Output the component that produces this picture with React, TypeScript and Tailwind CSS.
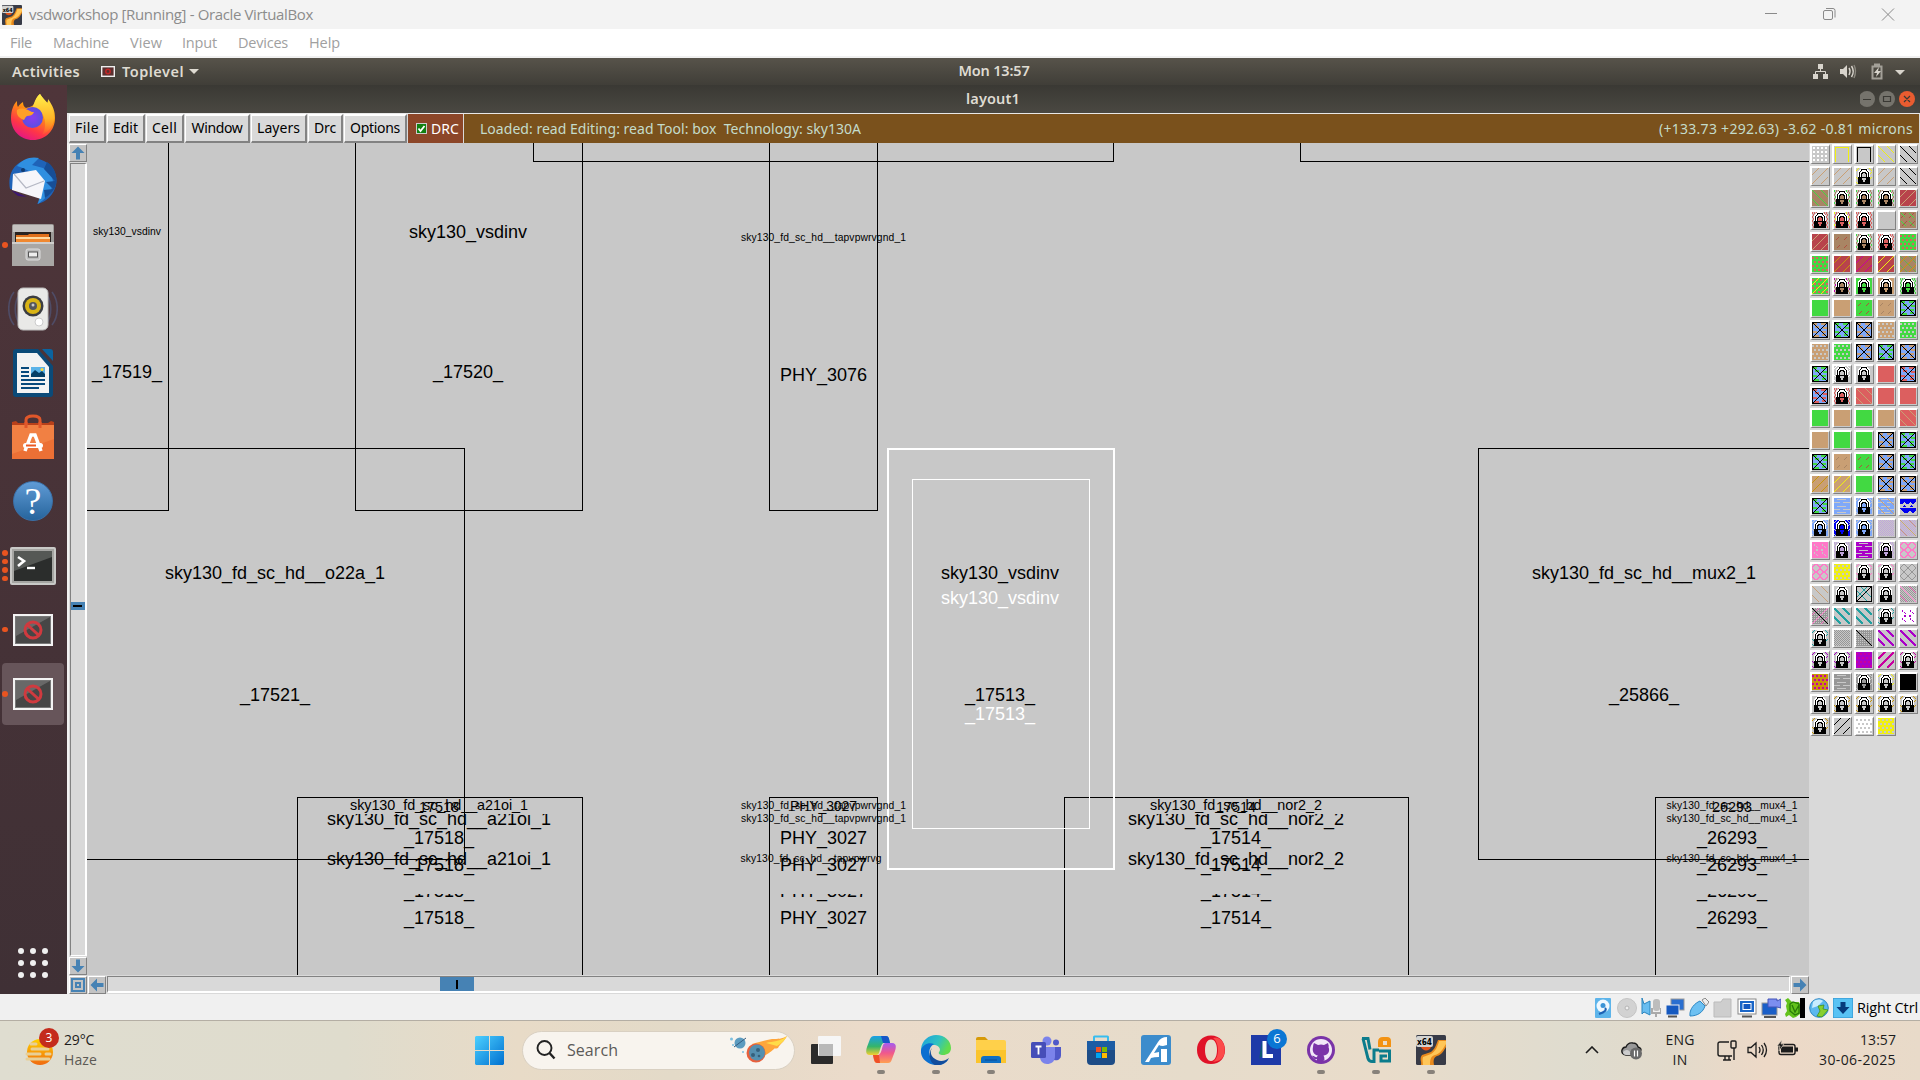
import React, { useLayoutEffect, useRef } from "react";

/* ---------- text that spreads its letters over a given width ---------- */
function Fit({ w, className = "", children }: { w: number; className?: string; children: string }) {
  const ref = useRef<HTMLSpanElement>(null);
  useLayoutEffect(() => {
    const el = ref.current;
    if (!el) return;
    el.style.letterSpacing = "0px";
    const natural = el.getBoundingClientRect().width;
    el.style.letterSpacing = `${(w - natural) / children.length}px`;
  }, [w, children]);
  return (
    <span ref={ref} className={"inline-block whitespace-pre " + className}>
      {children}
    </span>
  );
}

/* ---------- layer palette ---------- */
const C: Record<string, string> = {
  k: "#000000", w: "#ffffff", y: "#f0f010", t: "#c99f74", n: "#a98564", g: "#42d942", r: "#dc5f5f",
  R: "#b8434b", m: "#c800a0", o: "#c8960a", b: "#7fa8f8", B: "#0000f0", l: "#c0a4dc", p: "#ff78c8",
  P: "#aa00c8", T: "#20a0a0", a: "#969696", _: "#c8c8c8", D: "#b05040",
};

/* each tile: kind + fill + ink colours */
const PALETTE = [
  "G_w F_y F_k \\_y \\_k",
  "/_t /_t L_y /_t \\_k",
  "\\ng Cng Cng Cng /Rt",
  "Crr Cry Crr S_ %ng",
  "/Rt :nD Cng Crr Ogr",
  "Ogr /Ro /Rm /Ry Xno",
  "Ygy Cnm Lgg Ltt Cgg",
  "Sg St :gD :tn Kbg",
  "Kbt Kbg Kbt Ot_ Og_",
  "Ot_ Og_ Kbt Kbg Kbt",
  "Kbg L_w L__ Sr Kbr",
  "Kbr Crr \\rt Sr Sr",
  "Sg St Sg St \\rt",
  "St Sg Sg Kbt Kbg",
  "Kbg :tn :gD Kbt Kbg",
  "/to /ty Sg Kbt Kbt",
  "Kbg Wb_ Lb_ Wbt M_B",
  "Lb_ LB_ Lb_ Hl_ Hlt",
  "Np_ Cll WP_ Cll Q_p",
  "Q_p Yy_ L_p L_p Z_a",
  "\\_t L__ E_T L__ Hap",
  "Kap =_T =_T L_T NwP",
  "L_T Ha_ Ka_ =_P =_P",
  "L_P L_P OPm +_m L_m",
  "Oom Wa_ La_ L_y Sk",
  "L__ L_o L_o L_o L_o",
  "L_o /_k Ow_ Oy_",
].map((row) => row.split(" "));

const grid = (n: number, f: (x: number, y: number) => React.ReactNode) => {
  const out: React.ReactNode[] = [];
  for (let y = 0; y < n; y++) for (let x = 0; x < n; x++) out.push(f(x, y));
  return out;
};

const Lock = ({ hole }: { hole: string }) => (
  <>
    <path d="M2 9V4l3-4h6l3 4v5z" fill="#fff" />
    <path d="M3.500 9V4.500L6 1.500h4l2.500 3V9" fill="none" stroke="#000" />
    <path d="M5.500 9V6L7 4.500h2L10.500 6v3z" fill={hole} stroke="#000" />
    <rect x="2" y="9" width="12" height="7" fill="#000" />
    <path d="M6 10h4v2H9v2H7v-2H6z" fill={hole} />
  </>
);

function Tile({ code }: { code: string }) {
  const kind = code[0];
  const bg = C[code[1]] ?? C._;
  const ink = C[code[2]] ?? C._;
  let body: React.ReactNode = null;
  const fwd = <path d="M0 7L7 0M0 16L16 0M9 16L16 9" stroke={ink} strokeWidth="1" />;
  const back = <path d="M9 0L16 7M0 0L16 16M0 9L7 16" stroke={ink} strokeWidth="1" />;
  let fill = bg;
  switch (kind) {
    case "G":
      body = grid(4, (x, y) => <rect key={`${x}-${y}`} x={x * 4 + 1} y={y * 4 + 1} width="2" height="2" fill={ink} />);
      break;
    case "F":
      body = <path d="M1.500 16V1.500H14.500V16" fill="none" stroke={ink} strokeWidth="1.3" />;
      break;
    case "/": body = fwd; break;
    case "\\": body = back; break;
    case "+": body = <path d="M0 7L7 0M0 16L16 0M9 16L16 9" stroke={ink} strokeWidth="1.6" />; break;
    case "=": body = <path d="M9 0L16 7M0 0L16 16M0 9L7 16" stroke={ink} strokeWidth="1.6" />; break;
    case "X": body = <><path d="M9 0L16 7M0 0L16 16M0 9L7 16" stroke="#62b052" />{fwd}</>; break;
    case ":": body = <path d="M2 6L5 3M10 6L13 3M3 14L6 11M10 14L13 11" stroke={ink} />; break;
    case "%": body = <><path d="M1 6L6 1M9 6L14 1M2 14L7 9M10 14L15 9" stroke="#b05040" /><path d="M1 1l4 4M9 1l5 5M1 9l5 5M9 9l5 5" stroke={ink} /></>; break;
    case "O":
    case "Y":
      body = (
        <>
          {grid(4, (x, y) => (
            <rect key={`${x}-${y}`} x={x * 4 + (y % 2 ? 2 : 0)} y={y * 4 + 1} width="2" height="2" fill={kind === "Y" && bg === C.g ? C.r : ink} />
          ))}
          {kind === "Y" && bg === C.g && fwd}
        </>
      );
      break;
    case "W":
      body = (
        <>
          {[1, 4, 8, 11, 14].map((y, i) => (
            <path key={y} d={i % 2 ? `M0 ${y + 0.5}h6M9 ${y + 0.5}h7` : `M3 ${y + 0.5}h9`} stroke={C._} />
          ))}
          {ink !== C._ && back}
        </>
      );
      break;
    case "M": body = <path d="M0 1h16v2l-2 3h-2l-2-2-2 2H6L4 4 2 6H0zM2 9l2-2 2 2zM9 9l2-2 3 2zM0 10h16v2l-2 3h-2l-2-2-3 2H4l-2-2z" fill={ink} />; break;
    case "N": body = <path d="M2 2l4 4M10 2l4 4M2 10l4 4M10 10l4 4M4 8h2M9 8h3" stroke={ink} strokeWidth="1.4" strokeDasharray="2 1" />; break;
    case "Q":
      body = <g fill="none" stroke={ink} strokeWidth="1.500"><circle cx="4" cy="4" r="3.500" /><circle cx="12" cy="4" r="3.500" /><circle cx="4" cy="12" r="3.500" /><circle cx="12" cy="12" r="3.500" /></g>;
      break;
    case "Z":
      body = <path d="M0 4l4-4 12 12-4 4L0 4M0 12L12 0l4 4L4 16z" fill="none" stroke={ink} />;
      break;
    case "H":
      fill = C._;
      body = (
        <>
          {grid(8, (x, y) => <rect key={`${x}-${y}`} x={x * 2} y={y * 2} width="1" height="1" fill={bg} />)}
          {grid(8, (x, y) => <rect key={`b${x}-${y}`} x={x * 2 + 1} y={y * 2 + 1} width="1" height="1" fill={bg} />)}
          {code[2] !== "_" && back}
        </>
      );
      break;
    case "E": body = <><path d="M0 4L12 16M4 0L16 12M0 12L12 0" stroke={ink} strokeWidth="1.3" /><path d="M0 16L16 0M.5 .5h15v15H.5z" fill="none" stroke="#000" /></>; break;
    case "K":
      body =
        bg === C.a ? (
          <>
            {grid(8, (x, y) => <rect key={`${x}-${y}`} x={x * 2} y={y * 2} width="1" height="1" fill={C._} />)}
            {ink !== C._ && <path d="M0 7L7 0M0 16L16 0M9 16L16 9" stroke={ink} />}
            <path d="M0 0L16 16" stroke="#000" strokeWidth="1.200" />
          </>
        ) : (
          <>
            <path d="M1 2h4M9 2h5M3 5h4M11 6h4M1 10h4M10 10h4M2 14h5M10 13h4" stroke={ink} strokeWidth="2" />
            <path d="M.5 .5h15v15H.5zM0 0L16 16M0 16L16 0" fill="none" stroke="#000" />
          </>
        );
      break;
    case "C":
      fill = C._;
      body = (
        <>
          {grid(8, (x, y) => <rect key={`${x}-${y}`} x={x * 2 + (y % 2)} y={y * 2} width="1" height="2" fill={(x + y) % 3 ? bg : ink} />)}
          <Lock hole={bg} />
        </>
      );
      break;
    case "L":
      body = (
        <>
          {ink !== bg && <path d="M0 3l3-3M13 0l3 3M0 9l2 2M14 11l2-2M0 14l2 2M14 6l2-2" stroke={ink} />}
          <Lock hole={bg} />
        </>
      );
      break;
  }
  return (
    <div className="flex h-5 w-5 items-start justify-start border-t-2 border-l-2 border-r border-b border-t-white border-l-white border-r-[#828282] border-b-[#828282] bg-[#c8c8c8]">
      <svg width="16" height="16" viewBox="0 0 16 16" shapeRendering="crispEdges" className="block">
        <rect width="16" height="16" fill={fill} />
        {body}
      </svg>
    </div>
  );
}

/* ---------- layout canvas ---------- */
type Label = { t: string; x: number; y: number; w: number; s?: number; c?: string; clip?: number };
const big = "sky130_fd_sc_hd__a21oi_1";
const nor = "sky130_fd_sc_hd__nor2_2";
const tap = "sky130_fd_sc_hd__tapvpwrvgnd_1";
const mux = "sky130_fd_sc_hd__mux4_1";
const stack = (t: string, x: number, w: number): Label[] => [
  { t, x, y: 844, w },
  { t, x, y: 871, w },
  { t, x, y: 897, w, clip: 894 },
  { t, x, y: 924, w },
];
const LABELS: Label[] = [
  { t: "sky130_vsdinv", x: 127, y: 235, w: 68, s: 10.3 },
  { t: "sky130_vsdinv", x: 468, y: 238, w: 118 },
  { t: tap, x: 823.5, y: 241, w: 165, s: 10.3 },
  { t: "_17519_", x: 127, y: 378, w: 70 },
  { t: "_17520_", x: 468, y: 378, w: 70 },
  { t: "PHY_3076", x: 823.5, y: 381, w: 87 },
  { t: "sky130_fd_sc_hd__o22a_1", x: 275, y: 579, w: 220 },
  { t: "_17521_", x: 275, y: 701, w: 70 },
  { t: "sky130_vsdinv", x: 1000, y: 579, w: 118 },
  { t: "sky130_vsdinv", x: 1000, y: 604, w: 118, c: "#fff" },
  { t: "_17513_", x: 1000, y: 701, w: 70 },
  { t: "_17513_", x: 1000, y: 720, w: 70, c: "#fff" },
  { t: "sky130_fd_sc_hd__mux2_1", x: 1644, y: 579, w: 224 },
  { t: "_25866_", x: 1644, y: 701, w: 70 },
  { t: big, x: 439, y: 810, w: 178, s: 14.4 },
  { t: "17518", x: 439, y: 812, w: 40, s: 14.4 },
  { t: big, x: 439, y: 825, w: 224, clip: 814 },
  { t: big, x: 439, y: 865, w: 224 },
  ...stack("_17518_", 439, 70),
  { t: tap, x: 823.5, y: 809, w: 165, s: 10.3 },
  { t: "PHY_3027", x: 823.5, y: 811, w: 67, s: 14 },
  { t: tap, x: 823.5, y: 822, w: 165, s: 10.3 },
  { t: "sky130_fd_sc_hd__tapvpwrvg", x: 811, y: 862, w: 141, s: 10.3 },
  ...stack("PHY_3027", 823.5, 87),
  { t: nor, x: 1236, y: 810, w: 172, s: 14.4 },
  { t: "17514", x: 1236, y: 812, w: 40, s: 14.4 },
  { t: nor, x: 1236, y: 825, w: 216, clip: 814 },
  { t: nor, x: 1236, y: 865, w: 216 },
  ...stack("_17514_", 1236, 70),
  { t: mux, x: 1732, y: 809, w: 131, s: 10.3 },
  { t: "26293", x: 1732, y: 812, w: 40, s: 14.4 },
  { t: mux, x: 1732, y: 822, w: 131, s: 10.3 },
  { t: mux, x: 1732, y: 862, w: 131, s: 10.3 },
  ...stack("_26293_", 1732, 70),
];

const Canvas = () => (
  <svg width="1722" height="832" viewBox="87 143 1722 832" className="block bg-[#c8c8c8]">
    <defs>
      <clipPath id="c814"><rect x="87" y="814" width="1722" height="40" /></clipPath>
      <clipPath id="c894"><rect x="87" y="894" width="1722" height="20" /></clipPath>
    </defs>
    <g fill="none" stroke="#000" shapeRendering="crispEdges">
      <rect x="60.5" y="100.5" width="108" height="410" />
      <rect x="355.5" y="100.5" width="227" height="410" />
      <rect x="533.5" y="100.5" width="580" height="61" />
      <rect x="769.5" y="100.5" width="108" height="410" />
      <rect x="1300.5" y="100.5" width="580" height="61" />
      <rect x="60.5" y="448.5" width="404" height="411" />
      <rect x="1478.5" y="448.5" width="404" height="411" />
      <rect x="297.5" y="797.5" width="285" height="300" />
      <rect x="769.5" y="797.5" width="108" height="300" />
      <rect x="1064.5" y="797.5" width="344" height="300" />
      <rect x="1655.5" y="797.5" width="344" height="300" />
      <rect x="888" y="449" width="226" height="420" stroke="#fff" strokeWidth="2" />
      <rect x="912.5" y="479.5" width="177" height="349" stroke="#fff" />
    </g>
    <g fontFamily="'Liberation Sans', sans-serif" textAnchor="middle">
      {LABELS.map((l, i) => (
        <text
          key={i}
          x={l.x}
          y={l.y}
          fontSize={l.s ?? 18}
          fill={l.c ?? "#000"}
          textLength={l.w}
          clipPath={l.clip === 814 ? "url(#c814)" : l.clip === 894 ? "url(#c894)" : undefined}
        >
          {l.t}
        </text>
      ))}
    </g>
  </svg>
);

/* ---------- scroll bars ---------- */
const BTN = "flex h-[18px] w-[18px] shrink-0 items-center justify-center border border-t-white border-l-white border-r-[#828282] border-b-[#828282] bg-[#c3c3c3]";
const Arrow = ({ r }: { r: number }) => (
  <svg width="14" height="14" viewBox="0 0 14 14" style={{ transform: `rotate(${r}deg)` }}>
    <path d="M7 0.5L13.5 7H9v6.5H5V7H.5z" fill="#4682b4" />
  </svg>
);

/* ---------- dock icons ---------- */
const Firefox = () => (
  <svg width="48" height="48" viewBox="0 0 48 48">
    <defs>
      <linearGradient id="ff" x1=".8" y1="0" x2=".3" y2="1"><stop offset="0" stopColor="#fff44f" /><stop offset=".4" stopColor="#ff980e" /><stop offset=".75" stopColor="#ff3647" /><stop offset="1" stopColor="#e31587" /></linearGradient>
      <linearGradient id="fy" x1="0" y1="0" x2="0" y2="1"><stop offset="0" stopColor="#fff04a" /><stop offset=".6" stopColor="#ffb428" /><stop offset="1" stopColor="#ff7a28" stopOpacity=".2" /></linearGradient>
      <radialGradient id="fp"><stop offset="0" stopColor="#8a3df0" /><stop offset="1" stopColor="#5b4fe0" /></radialGradient>
    </defs>
    <path d="M31 1c2 3 4 6 7 9 1-1 1-3 1-4 5 7 7 12 7 19 0 12-9 22-22 22S2 37 2 25C2 18 4 12 8 8c0 3 0 4 1 6 1-2 3-4 5-5 0 3 1 5 3 6 4-1 8-2 9-6 1-3 2-6 5-8z" fill="url(#ff)" />
    <path d="M31 1c4 7 14 12 14 24 0 8-6 14-12 17 4-6 4-14 1-20-2-4-6-7-10-8 1-5 4-11 7-13z" fill="url(#fy)" />
    <circle cx="23.500" cy="24.500" r="10.500" fill="url(#fp)" />
    <path d="M8 17c5-3 9-1 13 1 1 1 3 1 4 1-1 3-4 4-7 4-2 1-2 3-3 4-5-2-8-5-7-10z" fill="#ffa028" />
  </svg>
);
const Thunderbird = () => (
  <svg width="50" height="50" viewBox="0 0 50 50">
    <path d="M3 17C8 4 25-1 36 5c9 4 14 14 12 24-2 9-9 17-19 19l4-7L2 33c-1-5-1-10 1-16z" fill="#1f63b8" />
    <path d="M9 10c5-7 14-10 22-8l-7 7 11 3c8 4 12 12 9 19-2 7-7 12-14 17l2-10C39 27 30 17 9 10z" fill="#2f8fe0" />
    <path d="M36 13l11 12-9 1 7 7-9 1 1 8c9-6 13-13 11-22-1-6-4-11-9-14z" fill="#174e96" />
    <path d="M5 18l23-4 9 11-4 18L4 34z" fill="#f6f6fa" />
    <path d="M6 18l12 14 18-7" fill="none" stroke="#b5b8c4" strokeWidth="1.2" />
    <path d="M3 34l16 7-9-1z" fill="#3c1673" />
    <circle cx="15" cy="14" r="2" fill="#103b70" />
  </svg>
);
const Files = () => (
  <svg width="44" height="46" viewBox="0 0 44 46">
    <rect x="1" y="2" width="42" height="42" rx="2" fill="#9c9a98" /><path d="M2 3h40v7H2z" fill="#c4c2c0" />
    <path d="M4 10h36v10H4z" fill="#2b2320" /><path d="M5 13h12l1-1h20v8H5z" fill="#e0701c" /><path d="M5 15h34v2H5z" fill="#ffd9a0" /><path d="M5 17h34v3H5z" fill="#f08830" />
    <path d="M1 20h42v24H1z" fill="#a9a7a5" /><path d="M1 20h42v2H1z" fill="#d0cecc" />
    <rect x="15" y="27" width="14" height="11" rx="2" fill="#bbb" stroke="#ddd" /><rect x="17.500" y="30" width="9" height="5" fill="#eee" stroke="#555" />
  </svg>
);
const Rhythm = () => (
  <svg width="50" height="46" viewBox="0 0 50 46">
    <path d="M6 6C-1 15-1 30 6 39M11 9c-5 8-5 20 0 28M44 6c7 9 7 24 0 33M39 9c5 8 5 20 0 28" fill="none" stroke="#4f4c66" strokeWidth="1.600" />
    <rect x="10" y="2" width="30" height="42" rx="5" fill="#e9e9e7" stroke="#bbb" />
    <circle cx="25" cy="20" r="10.500" fill="#3b3d42" /><circle cx="25" cy="20" r="8" fill="#d9b416" /><circle cx="25" cy="20" r="4" fill="#55575c" /><circle cx="25" cy="19" r="1.500" fill="#ccc" />
    <circle cx="31" cy="36" r="4" fill="#fff" stroke="#ccc" />
  </svg>
);
const Writer = () => (
  <svg width="40" height="48" viewBox="0 0 40 48">
    <path d="M3 0h22l15 17v28a3 3 0 0 1-3 3H3a3 3 0 0 1-3-3V3a3 3 0 0 1 3-3z" fill="#0b4a78" /><path d="M29 0h8a3 3 0 0 1 3 3v9z" fill="#0b64a0" />
    <path d="M4 4h20l12 14v26H4z" fill="#f3f3f3" />
    <path d="M8 19h8M8 23h8M8 27h8M8 31h24M8 35h24M8 39h18" stroke="#084a7c" strokeWidth="2" />
    <rect x="18" y="18" width="14" height="10" fill="#5cb3e8" /><path d="M18 28v-3l4-4 4 3 3-2 3 3v3z" fill="#063f66" /><circle cx="29" cy="20.500" r="1.500" fill="#ffd83a" />
  </svg>
);
const Software = () => (
  <svg width="44" height="46" viewBox="0 0 44 46">
    <path d="M1 8l4-1 2 2 30 0 3-2 3 1v6H1z" fill="#b8401a" /><path d="M15 14V6q0-4 7-4t7 4v8" fill="none" stroke="#e0572a" strokeWidth="3" />
    <path d="M1 11h42v34H1z" fill="#ec7035" /><path d="M1 11h42v14L1 40z" fill="#f58a4c" opacity=".6" />
    <path d="M15 14V8M29 14V8" stroke="#e0572a" strokeWidth="3" />
    <path d="M14 37l6-16h4l6 16" fill="none" stroke="#fff" strokeWidth="3.500" /><rect x="12" y="29" width="20" height="5" rx="2.500" fill="#fff" /><path d="M15 31.500h10" stroke="#ec5a24" strokeWidth="2" />
  </svg>
);
const Help = () => (
  <div className="flex h-10 w-10 items-center justify-center rounded-full border border-[#3a70a8] bg-linear-to-b from-[#5f9bd6] to-[#26659c] font-['Liberation_Serif',serif] text-[38px] leading-none text-white">?</div>
);
const Terminal = () => (
  <svg width="46" height="38" viewBox="0 0 46 38">
    <rect width="46" height="38" rx="2" fill="#c9c9c7" /><rect x="2" y="2" width="42" height="34" fill="#a5a5a2" /><rect x="4" y="4" width="38" height="30" fill="#2b2d2c" /><path d="M4 4h38v6L4 24z" fill="#555855" />
    <path d="M8 10l6 4-6 5" fill="none" stroke="#fff" strokeWidth="2.600" /><path d="M17 21h8" stroke="#fff" strokeWidth="2.400" />
  </svg>
);
const NoApp = () => (
  <svg width="40" height="32" viewBox="0 0 40 32">
    <rect width="40" height="32" fill="#f3f3f3" /><rect x="2" y="2" width="36" height="28" fill="#777" /><rect x="3" y="3" width="34" height="26" fill="#464646" /><path d="M3 3h34L3 22z" fill="#686868" />
    <circle cx="20" cy="16" r="8" fill="none" stroke="#cf3a3f" strokeWidth="3" /><path d="M14 10.500l12 11" stroke="#cf3a3f" strokeWidth="3" />
  </svg>
);

const DOCK: { el: React.ReactNode; dots: number; active?: boolean }[] = [
  { el: <Firefox />, dots: 0 }, { el: <Thunderbird />, dots: 0 }, { el: <Files />, dots: 1 }, { el: <Rhythm />, dots: 0 },
  { el: <Writer />, dots: 0 }, { el: <Software />, dots: 0 }, { el: <Help />, dots: 0 }, { el: <Terminal />, dots: 4 },
  { el: <NoApp />, dots: 1 }, { el: <NoApp />, dots: 1, active: true },
];

/* ---------- VirtualBox icon ---------- */
const VBoxIcon = ({ size }: { size: number }) => (
  <svg width={size} height={size} viewBox="0 0 30 30">
    <rect width="30" height="30" rx="1.500" fill="#383b47" />
    <path d="M30 5H22c-2 5-3 9-7 12l-9 3c-3 4 0 7-1 10h13c-1-5 0-8 3-9 5-1 7-6 9-9z" fill="#e8891c" /><path d="M30 6h-7c-1 5-4 11-8 13l-8 3c-1 3 0 5 0 8h7c0-6 1-9 5-10 5-1 8-6 11-11z" fill="#ffc658" />
    <path d="M5 12h10c-1 4-8 5-10 0z" fill="#e2531c" />
    <rect x="0" y="1" width="17" height="11" rx="2" fill="#d3d3d1" />
    <text x="8.500" y="9.800" fontSize="8.500" fontWeight="700" textAnchor="middle" fontFamily="'DejaVu Sans', sans-serif" textLength="15" lengthAdjust="spacingAndGlyphs">x64</text>
  </svg>
);

/* ---------- VirtualBox status icons ---------- */
const STATUS = [
  <><rect x="2" y="0" width="16" height="20" rx="1" fill="#5db4ea" /><circle cx="10" cy="8" r="6.500" fill="#eef8ff" /><circle cx="10" cy="7.500" r="2.500" fill="#3a93d6" /><path d="M12 10c2 2 0 4-6 6" stroke="#1c62b4" strokeWidth="2" fill="none" /></>,
  <><circle cx="10" cy="10" r="9.500" fill="#d2d2d2" stroke="#c4c4c4" /><circle cx="10" cy="10" r="2" fill="#eee" stroke="#b4b4b4" /></>,
  <><path d="M1 0l2 6 6-3v14l-6-3-2 2z" fill="#68bdf0" stroke="#2b84bd" /><rect x="12" y="1" width="7" height="12" rx="3" fill="#bdbdbd" /><path d="M11 10v5h9v-5M15 15v4" stroke="#aaa" strokeWidth="2" fill="none" /></>,
  <><rect x="6" y="1" width="13" height="11" fill="#2a6fd0" stroke="#999" /><rect x="1" y="7" width="13" height="10" fill="#1559c0" stroke="#eee" /><path d="M3 18.500h9" stroke="#555" strokeWidth="2" /></>,
  <><path d="M13 2l3-2 4 4-3 4z" fill="#eee" stroke="#888" /><path d="M1 18C0 11 6 5 11 3l5 5c-2 6-7 10-15 10z" fill="#6cc0f2" stroke="#2a86c4" /></>,
  <><path d="M1 4h7l2-3h8v18H1z" fill="#cecece" stroke="#bbb" /></>,
  <><rect x="1" y="1" width="18" height="15" fill="#fff" stroke="#888" /><rect x="3" y="3" width="14" height="11" fill="#1a66c8" /><rect x="6" y="5.500" width="8" height="6" fill="#1559c0" stroke="#fff" /><path d="M5 18.500h10" stroke="#555" strokeWidth="2" /></>,
  <><rect x="1" y="5" width="15" height="12" fill="#1a5fc8" stroke="#999" /><path d="M7 1h9v2l4-2v9l-4-1H7z" fill="#7c8ef0" stroke="#4455b8" /><path d="M3 19h12" stroke="#555" strokeWidth="2" /></>,
  <><path d="M15 0h5v20h-5z" fill="#000" /><path d="M0 2l3-2 4 4h7l1 3v9l-4 3-3 1-4-3-3 2-1-3 2-3-1-5 1-3z" fill="#62c21c" /><path d="M5 6l3-2 6 2v9l-4 2-5-4zM7 7l3 7 4-7" stroke="#277a08" strokeWidth="1.300" fill="none" /></>,
  <><circle cx="10" cy="10" r="9.300" fill="#5cb8ee" stroke="#2a86c4" /><path d="M4 4c3-3 7-3 10-1l-5 5-6 2z" fill="#c7ecff" /><path d="M9 8l6-1-1 4 5 1-6 7-5-1 3-5z" fill="#87d030" stroke="#3a8a10" strokeWidth=".7" /></>,
  <><rect x="0" y="0" width="20" height="20" rx="1" fill="#58c2f4" stroke="#2a8cc8" /><path d="M7.500 4h5v5h4L10 16 3.500 9h4z" fill="#063a7c" /></>,
];

/* ---------- Taskbar icons (30 x 30) ---------- */
const TASK: { el: React.ReactNode; run?: boolean; badge?: string }[] = [
  { el: <><rect x="0" y="9" width="22" height="20" rx="1" fill="#2b2b2b" /><rect x="7" y="1" width="23" height="20" rx="1" fill="#f6f6f6" /><path d="M8 9h14v12H8z" fill="#b9b9b9" /></> },
  { run: true, el: <><defs><linearGradient id="cp1" x1="0" y1="0" x2="0" y2="1"><stop offset="0" stopColor="#1a9fe8" /><stop offset=".55" stopColor="#35b56a" /><stop offset="1" stopColor="#f4d030" /></linearGradient><linearGradient id="cp2" x1="0" y1="0" x2="0" y2="1"><stop offset="0" stopColor="#a45cf0" /><stop offset=".5" stopColor="#f0588c" /><stop offset="1" stopColor="#ffa050" /></linearGradient></defs>
    <path d="M8 1h12c3 0 3 3 4 7h-6c-3 0-4 8-5 10-1 2-2 2-4 2H4c-5 0-4-5-3-8l3-8c1-2 2-3 4-3z" fill="url(#cp1)" /><path d="M15 1h5c3 0 3 3 4 7h-7z" fill="#1756c8" /><path d="M22 28H11c-3 0-3-3-4-8h5c3 0 4-7 5-10 1-2 2-2 4-2h5c5 0 4 5 3 8l-3 8c-1 3-2 4-4 4z" fill="url(#cp2)" /><path d="M14 28h-3c-2 0-3-3-4-8h6z" fill="#ef5028" /></> },
  { run: true, el: <><defs><linearGradient id="ed" x1="0" y1="0" x2="1" y2=".4"><stop offset="0" stopColor="#1c9ee0" /><stop offset=".6" stopColor="#2fc2c0" /><stop offset="1" stopColor="#62dc4c" /></linearGradient></defs>
    <path d="M0 14C1 5 8 0 15 0c9 0 15 6 15 13 0 5-4 7-8 7-3 0-5-1-4-3 2-2 1-6-4-7-5 0-11 1-14 6z" fill="url(#ed)" /><path d="M0 15C2 9 8 7 13 9c-5 3-6 9-3 14 4 5 10 5 17 2-3 4-8 6-13 5C6 29-1 23 0 15z" fill="#0c6fd0" /><path d="M11 13c-3 5 0 10 5 12 4 2 8 1 12-2-2 5-9 8-14 7-6-3-7-12-3-17z" fill="#124c9c" /></> },
  { run: true, el: <><path d="M0 4q0-2 2-2h7l4 4H0z" fill="#d79a08" /><path d="M0 5h28q2 0 2 2v21H0z" fill="#ffd04a" /><path d="M0 15h30v13H0z" fill="#fbc42c" /><path d="M5 28v-4q0-3 3-3h14q3 0 3 3v4z" fill="#0f6fc4" /><path d="M9 25h12" stroke="#0a4c94" /></> },
  { el: <><circle cx="16" cy="6" r="4.500" fill="#7b83eb" /><circle cx="25" cy="7.500" r="3" fill="#5059c9" /><path d="M20 12h10v8c0 4-3 6-7 5z" fill="#5059c9" /><path d="M9 12h15v9c0 6-4 8-8 8-4 0-7-3-7-7z" fill="#7b83eb" /><rect x="0" y="7" width="15" height="16" rx="1.500" fill="#464eb8" /><path d="M4.500 11.500h6M7.500 11.500v8" stroke="#fff" strokeWidth="1.800" /></> },
  { el: <><path d="M8 7V2q0-.5 .5-.5h13q.5 0 .5 .5v5" fill="none" stroke="#38bdf0" strokeWidth="2" /><path d="M1 6h28v20q0 4-4 4H5q-4 0-4-4z" fill="#1d4c86" /><path d="M1 6h28v9H1z" fill="#1c5ca4" /><path d="M10 12h5v5h-5z" fill="#f25022" /><path d="M16 12h5v5h-5z" fill="#7fba00" /><path d="M10 18h5v5h-5z" fill="#00a4ef" /><path d="M16 18h5v5h-5z" fill="#ffb900" /></> },
  { el: <><rect width="30" height="30" rx="3" fill="#3c8ccc" /><path d="M4 27L17 7q3-5 9-5v8l-4 1q-3 0-4-1l-5 8 5-1v5q-5 0-8 1l-2 4z" fill="#fff" /><path d="M20 14h6v13h-6z" fill="#fff" /></> },
  { el: <><path d="M15 .5C6 .5 1 7 1 15s5 14 14 14 14-6 14-14S24 .500 15 .500zm0 4c4 0 6 5 6 10.500S19 26 15 26 9 21 9 15s2-10.500 6-10.500z" fill="#e01228" fillRule="evenodd" /><path d="M17 3c5-1 9 1 11 7 2 9 0 16-11 17 4-3 5-8 5-12s-1-9-5-12z" fill="#fc4a4a" /></> },
  { badge: "6", el: <><rect width="30" height="30" fill="#1e3aa8" /><path d="M11 6v16H9l-1 3z" fill="#0c5c70" /><path d="M13.500 6v15h8.500" stroke="#fff" strokeWidth="4" fill="none" /></> },
  { run: true, el: <><circle cx="15" cy="15" r="14" fill="#7a33a8" /><circle cx="15" cy="15" r="11" fill="#f2e8f8" /><path d="M8 8l4 2q3-1 6 0l4-2q1 3 .5 4c2 5-1 8-5 8.500q1 1 1 5l-3.500 1-4-.500v-2c-3 1-3-1-5-3 2-1 3 2 5 1q0-1 1-1.500c-4-.500-6-4-5-8.500q0-2 1-4z" fill="#7a33a8" /></> },
  { run: true, el: <><path d="M1 3.500h6l2 11M2 3.500l5 20q1 3 4 3h2V15h5" fill="none" stroke="#0c7c8c" strokeWidth="3" /><path d="M17 11V7q0-5 5-5h4q4 0 4 4v6H17zm5-1h4V6h-4z" fill="#f39212" /><path d="M30 16H18M28.500 16v10H20v-5h6" fill="none" stroke="#0c7c8c" strokeWidth="3" /></> },
];

const UI = "font-['Open_Sans',sans-serif]";
const MENUS: [string, number, number][] = [
  ["File", 37, 24], ["Edit", 38, 25], ["Cell", 38, 25], ["Window", 65, 51], ["Layers", 56, 43], ["Drc", 35, 22], ["Options", 63, 50],
];

export default function App() {
  return (
    <div className="flex h-[1080px] w-[1920px] flex-col overflow-hidden bg-[#f0f0f0] text-black">
      {/* host window title */}
      <div className={`flex h-[29px] shrink-0 items-center bg-[#f3f3f3] pl-[2px] text-[#8c8c8c] ${UI}`}>
        <VBoxIcon size={20} />
        <Fit w={284} className="ml-[7px] text-[15px]">vsdworkshop [Running] - Oracle VirtualBox</Fit>
        <svg width="170" height="29" viewBox="0 0 170 29" className="ml-auto" fill="none" stroke="#8a8a8a">
          <path d="M15 13.500h12" /><rect x="73.500" y="10.500" width="9" height="9" rx="1.500" /><path d="M76 8.500h7q2 0 2 2v7" /><path d="M132 8.500l12 12M144 8.500l-12 12" />
        </svg>
      </div>
      <div className={`flex h-[29px] shrink-0 items-start border-b-2 border-[#f0f0f0] bg-white pl-[10px] text-[14.5px] leading-[27px] text-[#a0a0a0] ${UI}`}>
        <Fit w={22} className="mr-[21px]">File</Fit>
        <Fit w={56} className="mr-[21px]">Machine</Fit>
        <Fit w={32} className="mr-[20px]">View</Fit>
        <Fit w={35} className="mr-[21px]">Input</Fit>
        <Fit w={50} className="mr-[21px]">Devices</Fit>
        <Fit w={31}>Help</Fit>
      </div>

      {/* guest top bar */}
      <div className="grid h-[27px] shrink-0 grid-cols-3 items-center bg-linear-to-b from-[#57534a] to-[#403e38] font-['Noto_Sans',sans-serif] text-[14.500px] font-semibold text-[#dfdbd2]">
        <div className="flex items-center pl-3">
          <Fit w={68}>Activities</Fit>
          <svg width="14" height="11" viewBox="0 0 14 11" className="ml-[21px]"><rect x=".7" y=".7" width="12.600" height="9.600" fill="#5a3030" stroke="#eee" strokeWidth="1.400" /><circle cx="7" cy="5.500" r="2.200" fill="none" stroke="#c02828" strokeWidth="1.500" /></svg>
          <Fit w={62} className="ml-[7px]">Toplevel</Fit>
          <span className="ml-[5px] border-x-[5px] border-t-[5px] border-x-transparent border-t-[#dfdbd2]" />
        </div>
        <div className="pb-px pl-[68px] text-center"><Fit w={71}>Mon 13:57</Fit></div>
        <svg width="110" height="27" viewBox="0 0 110 27" className="ml-auto" fill="#d8d4cc">
          <path d="M8 6h5v5H8zM3 16h5v5H3zM13 16h5v5h-5z" /><path d="M10.500 11v3M5.500 16v-2.500h10V16" fill="none" stroke="#d8d4cc" />
          <path d="M30 11h3l4-4v13l-4-4h-3z" /><path d="M39 10q2 3 0 7M41.500 8q3.500 5.500 0 11" fill="none" stroke="#d8d4cc" strokeWidth="1.500" /><path d="M44 7q3 6 0 13" fill="none" stroke="#8a877e" strokeWidth="1.400" />
          <path d="M62.500 8.500h9v12h-9zM65 8V6.500h4V8" fill="none" stroke="#a3a098" strokeWidth="2" /><path d="M69 9l-5 6h3l-1 4 5-6h-3z" />
          <path d="M85 12h10l-5 5z" />
        </svg>
      </div>

      <div className="flex h-[909px] shrink-0">
        {/* dock */}
        <div className="flex w-[67px] shrink-0 flex-col items-start bg-linear-to-b from-[#4f353a] to-[#3f3035]">
          {DOCK.map((d, i) => (
            <div key={i} className="flex h-[64.150px] w-[67px] shrink-0 items-center">
              <div className={`relative -mt-px ml-[2px] flex h-[62px] w-[62px] items-center justify-center rounded ${d.active ? "bg-[#67555a]" : ""}`}>
                <div className="absolute left-0 flex w-[5px] flex-col gap-[3px]">
                  {Array.from({ length: d.dots }, (_, k) => <span key={k} className="h-[5.500px] w-[5.500px] rounded-full bg-[#e95420]" />)}
                </div>
                {d.el}
              </div>
            </div>
          ))}
          <div className="mt-auto mb-4 ml-[18px] grid grid-cols-3 gap-[6px]">
            {Array.from({ length: 9 }, (_, k) => <span key={k} className="h-[6px] w-[6px] rounded-full bg-[#f0f0f0]" />)}
          </div>
        </div>

        {/* magic window */}
        <div className="flex min-w-0 flex-1 flex-col bg-[#d9d9d9]">
          <div className="flex h-7 shrink-0 items-center bg-linear-to-b from-[#3a3934] to-[#4a4842] font-['Noto_Sans',sans-serif]">
            <Fit w={54} className="ml-[899px] text-[14.500px] font-semibold text-[#dfdbd2]">layout1</Fit>
            <svg width="60" height="28" viewBox="0 0 60 28" className="ml-auto">
              <circle cx="7" cy="14" r="8" fill="#75736c" /><circle cx="27" cy="14" r="8" fill="#75736c" /><circle cx="47" cy="14" r="8" fill="#ea5c30" />
              <path d="M3 14.500h8M23.500 11.500h7v5h-7zM44 11l6 6M50 11l-6 6" stroke="#3a3934" fill="none" strokeWidth="1.200" />
            </svg>
          </div>
          <div className="flex h-[30px] shrink-0 border-t border-l-2 border-[#e8e8e8] pr-[1px] font-['Noto_Sans',sans-serif] text-[14px]">
            {MENUS.map(([t, w, tw]) => (
              <div key={t} className="flex shrink-0 pr-[1px]" style={{ width: w + 1 }}>
                <div className="flex flex-1 items-center justify-center border-t-2 border-r-2 border-b-2 border-l border-t-white border-r-[#828282] border-b-[#828282] border-l-white bg-[#d9d9d9] pb-0.5">
                  <Fit w={tw}>{t}</Fit>
                </div>
              </div>
            ))}
            <div className="flex w-[56px] shrink-0 items-center border-r border-[#d9d9d9] bg-[#8c4628] pb-px pl-[8px] text-white">
              <svg width="11" height="11" viewBox="0 0 11 11"><rect x=".5" y=".5" width="10" height="10" fill="#108010" stroke="#ccc" /><path d="M2.500 5.500l2 2.500 4-5" fill="none" stroke="#fff" strokeWidth="1.800" /></svg>
              <Fit w={28} className="ml-1">DRC</Fit>
            </div>
            <div className="flex flex-1 items-center justify-between bg-[#7a511c] pr-[6px] pb-px pl-[16px] text-[#c4dccb]">
              <Fit w={381}>{"Loaded: read Editing: read Tool: box  Technology: sky130A"}</Fit>
              <Fit w={254}>(+133.73 +292.63) -3.62 -0.81 microns</Fit>
            </div>
          </div>

          <div className="flex h-[851px]">
            <div className="flex w-[1742px] shrink-0 flex-col border-l-2 border-[#f2f2f2]">
              <div className="flex h-[832px]">
                <div className="flex w-[18px] shrink-0 flex-col items-center pt-px">
                  <div className={BTN}><Arrow r={0} /></div>
                  <div className="my-px flex w-[17px] flex-1 flex-col border-t border-r-2 border-b border-l border-t-[#828282] border-r-white border-b-white border-l-[#828282]">
                    <div className="mt-[438px] flex h-2 items-center justify-center bg-[#4682b4]"><span className="h-[2px] w-[9px] bg-black" /></div>
                  </div>
                  <div className={BTN}><Arrow r={180} /></div>
                </div>
                <Canvas />
              </div>
              <div className="flex h-[19px] items-center">
                <div className={BTN}><svg width="14" height="14" viewBox="0 0 14 14" fill="none" stroke="#4682b4" strokeWidth="2"><rect x="1" y="1" width="12" height="12" /><rect x="5" y="5" width="4" height="4" /></svg></div>
                <div className={BTN + " ml-px"}><Arrow r={-90} /></div>
                <div className="mx-px flex h-[17px] flex-1 border-t border-r border-b-2 border-l border-t-[#828282] border-r-white border-b-white border-l-[#828282]">
                  <div className="ml-[332px] flex w-[34px] items-center justify-center bg-[#4682b4]"><span className="h-[9px] w-[2px] bg-black" /></div>
                </div>
                <div className={BTN}><Arrow r={90} /></div>
              </div>
            </div>
            <div className="ml-px flex flex-col gap-[2px] pt-px">
              {PALETTE.map((row, i) => (
                <div key={i} className="flex gap-[2px]">{row.map((c, j) => <Tile key={j} code={c} />)}</div>
              ))}
            </div>
          </div>
        </div>
      </div>

      {/* host status bar */}
      <div className={`flex h-[26px] shrink-0 items-center justify-end gap-1 bg-[#f0f0f0] pt-0.5 pr-[2px] ${UI}`}>
        {STATUS.map((s, i) => <svg key={i} width="20" height="20" viewBox="0 0 20 20">{s}</svg>)}
        <Fit w={61} className="text-[14.500px]">Right Ctrl</Fit>
      </div>

      {/* taskbar */}
      <div className={`flex h-[60px] shrink-0 items-center border-t border-[#b4aea4] bg-[linear-gradient(90deg,#dfddd0_0%,#dfdccd_18%,#e8dbc7_27%,#e3dac8_35%,#ebdbca_45%,#e6dccb_62%,#e9dcca_72%,#dfdccf_82%,#e2dacb_87%,#edd9c7_92%,#e8dac9_100%)] pb-px ${UI}`}>
        <div className="flex w-[475px] items-center pl-[25px]">
          <div className="relative h-[36px] w-[36px]">
            <svg width="36" height="36" viewBox="0 0 36 36">
              <defs><linearGradient id="sun" x1="0" y1="0" x2="0" y2="1"><stop offset="0" stopColor="#ffd000" /><stop offset="1" stopColor="#f06a10" /></linearGradient></defs>
              <circle cx="15" cy="20" r="13" fill="url(#sun)" /><path d="M6 12h5M7 17h16M2 22h13M21 22h4M2 27h22" stroke="#e8cf96" strokeWidth="3" strokeLinecap="round" />
            </svg>
            <div className="absolute -top-[4px] left-[14px] flex h-5 w-5 items-center justify-center rounded-full bg-[#c42b1c] text-[12px] text-white">3</div>
          </div>
          <div className="ml-[3px] flex flex-col text-[14px] leading-5">
            <Fit w={32} className="text-[#1c1c1c]">29°C</Fit>
            <Fit w={33} className="text-[#5c5a55]">Haze</Fit>
          </div>
        </div>
        <svg width="29" height="29" viewBox="0 0 29 29"><defs><linearGradient id="win" x1="0" y1="0" x2="1" y2="1"><stop offset="0" stopColor="#4cd0ff" /><stop offset="1" stopColor="#0070d0" /></linearGradient></defs><path d="M1 0h13v14H0V1zM15 0h13l1 1v13H15zM0 15h14v14H1l-1-1zM15 15h14v13l-1 1H15z" fill="url(#win)" /></svg>
        <div className="ml-[18px] flex h-[39px] w-[273px] items-center rounded-full border border-[#d9d0c2] bg-[#f8f4ee] pl-[13px]">
          <svg width="20" height="20" viewBox="0 0 20 20" fill="none" stroke="#222" strokeWidth="1.900"><circle cx="8.500" cy="8" r="7" /><path d="M13.500 13l5 5.500" strokeWidth="2.400" /></svg>
          <Fit w={51} className="ml-[11px] text-[16px] text-[#5c5a58]">Search</Fit>
          <svg width="58" height="28" viewBox="0 0 58 28" className="ml-auto mr-[6px]">
            <circle cx="10" cy="7" r="5.500" fill="#5c9cc0" /><path d="M4 11L16 2" stroke="#335c80" /><circle cx="1.500" cy="3" r="1.500" fill="#7cc0e0" /><circle cx="3" cy="9" r="1" fill="#7cc0e0" /><circle cx="13" cy="16" r="1" fill="#7cc0e0" />
            <path d="M22 8C30 6 36 4 42 3c6 0 10 0 15-3-3 6-7 8-9 12-2 1-4 0-4 1-4 4-8 5-10 8z" fill="#ffa63c" /><path d="M36 7c7-2 14-1 21-7-3 6-7 8-10 10z" fill="#ffdc48" />
            <circle cx="26" cy="17" r="9.500" fill="#e8603c" /><circle cx="27" cy="16.500" r="8" fill="#5590b0" /><circle cx="28" cy="14" r="2" fill="#34607c" /><circle cx="23" cy="19" r="2" fill="#34607c" /><circle cx="29" cy="20" r="1.300" fill="#34607c" />
          </svg>
        </div>
        <div className="ml-4 flex gap-[25px]">
          {TASK.map((t, i) => (
            <div key={i} className="relative h-[30px] w-[30px]">
              <svg width="30" height="30" viewBox="0 0 30 30">{t.el}</svg>
              {t.badge && <div className="absolute -top-[6px] left-4 flex h-5 w-5 items-center justify-center rounded-full bg-[#0a76d4] text-[13px] text-white">{t.badge}</div>}
              {t.run && <span className="absolute top-[35px] left-[11px] h-1 w-2 rounded-full bg-[#87817a]" />}
            </div>
          ))}
          <div className="relative h-[30px] w-[30px]">
            <VBoxIcon size={30} />
            <span className="absolute top-[35px] left-[11px] h-1 w-2 rounded-full bg-[#87817a]" />
          </div>
        </div>
        <div className="ml-auto flex items-center pr-[24px] text-[#1c1c1c]">
          <svg width="14" height="8" viewBox="0 0 14 8" fill="none" stroke="#1c1c1c" strokeWidth="1.600"><path d="M1 7l6-6 6 6" /></svg>
          <svg width="22" height="20" viewBox="0 0 22 20" className="ml-[22px]"><path d="M5 15q-5-1-4-5 1-3 4-3 2-5 7-4 4 0 5 4 3 1 3 3l-8 5z" fill="#999" stroke="#1c1c1c" strokeWidth="1.400" /><path d="M2 12q5-5 9 3H5q-3 0-3-3z" fill="#ccc" /><circle cx="15" cy="13.500" r="6" fill="#6a6a6a" /><path d="M13.500 10.500v6M16.500 10.500v6" stroke="#fff" strokeWidth="1.200" /></svg>
          <div className="ml-[22px] flex w-[30px] flex-col items-center text-[14px] leading-5">
            <Fit w={29}>ENG</Fit>
            <Fit w={15}>IN</Fit>
          </div>
          <svg width="20" height="21" viewBox="0 0 20 21" className="ml-[22px]" fill="none" stroke="#1c1c1c" strokeWidth="1.400"><path d="M12 2H3Q1 2 1 4v10q0 2 2 2h12M6 20h8M8 16v4M12 16v4M17 8v12" /><rect x="14" y="1" width="5" height="7" rx="1" /></svg>
          <svg width="21" height="20" viewBox="0 0 21 20" className="ml-[10px]" fill="none" stroke="#1c1c1c" strokeWidth="1.300"><path d="M1 7.500h3l5-4.500v14l-5-4.500H1zM12 7q2 3 0 6M14.500 5q3.500 5 0 10M17 3q5 7 0 14" /></svg>
          <svg width="21" height="20" viewBox="0 0 21 20" className="ml-[9px]"><rect x="2" y="4.500" width="16" height="10" rx="2" fill="none" stroke="#1c1c1c" strokeWidth="1.400" /><path d="M4 6.500h12v6H4zM18 7.500h3v4h-3z" fill="#1c1c1c" /><path d="M5 0L0 6h3l-1 5 5-7H4z" fill="#1c1c1c" stroke="#e8dac9" strokeWidth=".6" /></svg>
          <div className="ml-[18px] flex w-[80px] flex-col items-end text-[14px] leading-5">
            <Fit w={36}>13:57</Fit>
            <Fit w={77}>30-06-2025</Fit>
          </div>
        </div>
      </div>
    </div>
  );
}
